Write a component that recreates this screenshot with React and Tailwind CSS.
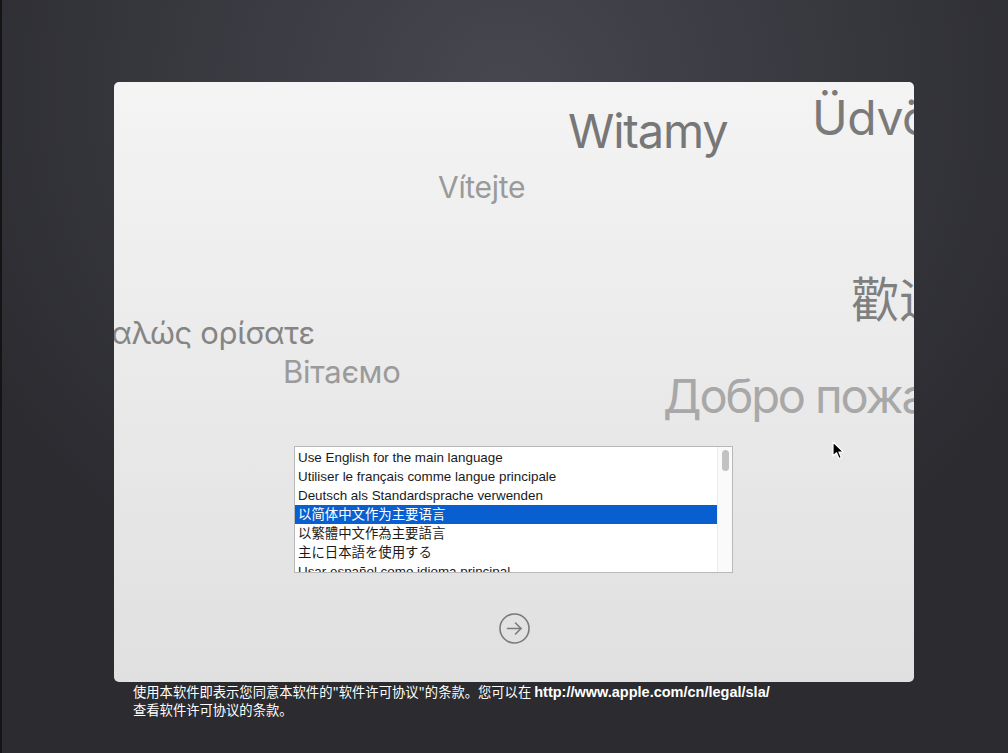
import React, { useState } from 'react'

const languages = [
    'Use English for the main language',
    'Utiliser le français comme langue principale',
    'Deutsch als Standardsprache verwenden',
    '以简体中文作为主要语言',
    '以繁體中文作為主要語言',
    '主に日本語を使用する',
    'Usar español como idioma principal',
];

const greetings = [
    { text: 'Witamy', cls: 'left-[454px] top-[25px] text-[47px] tracking-[-0.025em] text-[#777777]' },
    { text: 'Üdvözöljük', cls: 'left-[698px] top-[12px] text-[48px] tracking-[-0.01em] text-[#7a7a7a]' },
    { text: 'Vítejte', cls: 'left-[324px] top-[90px] text-[30px] tracking-[-0.01em] text-[#9a9a9a]' },
    { text: '歡迎使用', cls: 'left-[737px] top-[194px] text-[48px] text-[#7f7f7f]' },
    { text: 'Καλώς ορίσατε', cls: 'left-[-22px] top-[235px] text-[31px] tracking-[-0.01em] text-[#858585]' },
    { text: 'Вітаємо', cls: 'left-[169px] top-[274px] text-[31px] tracking-[-0.01em] text-[#9b9b9b]' },
    { text: 'Добро пожаловать', cls: 'left-[549px] top-[290px] text-[47px] tracking-[-0.045em] text-[#a8a8a8]' },
];

function Cursor() {
    return (
        <svg className="absolute left-[830px] top-[441px]" width="14" height="20" viewBox="0 0 14 20">
            <path d="M1 1 L1 15 L4.5 11.8 L7 17.5 L9.3 16.5 L6.9 11 L11.5 11 Z" fill="#000" stroke="#fff" strokeWidth="1.2" strokeLinejoin="round" />
        </svg>
    );
}

export default function App() {
    const [selected, setSelected] = useState(3);

    return (
        <div className="relative h-[753px] w-[1008px] overflow-hidden border-l-2 border-[#141414] bg-[radial-gradient(ellipse_60%_75%_at_50%_12%,#46474f_0%,#393a40_50%,#2b2b30_100%)] font-['Inter','Noto_Sans_CJK_SC',sans-serif]">
            <div className="pl-[112px] pt-[82px]">
                <div className="relative h-[600px] w-[800px] overflow-hidden rounded-[5px] bg-gradient-to-b from-[#f4f4f4] to-[#e0e0e0]">
                    {greetings.map((g) => (
                        <div key={g.text} className={`absolute whitespace-nowrap leading-none ${g.cls}`}>
                            {g.text}
                        </div>
                    ))}

                    <div className="flex flex-col items-center pt-[364px]">
                        <div className="-ml-[1px] flex h-[127px] w-[439px] overflow-hidden border border-[#b8b8b8] bg-white">
                            <ul className="flex-1 pt-[1px] text-[13.4px] leading-[19px] text-[#1a1a1a] font-['Liberation_Sans','Noto_Sans_CJK_SC',sans-serif]">
                                {languages.map((lang, i) => (
                                    <li
                                        key={lang}
                                        onClick={() => setSelected(i)}
                                        className={`h-[19px] whitespace-nowrap pl-[3px] ${i === selected ? 'bg-[#0a5fd0] text-white' : ''}`}
                                    >
                                        {lang}
                                    </li>
                                ))}
                            </ul>
                            <div className="w-[15px] border-l border-[#ececec] bg-[#fafafa] pt-[3px]">
                                <div className="mx-auto h-[21px] w-[7px] rounded-full bg-[#c2c2c2]" />
                            </div>
                        </div>

                        <button className="mt-[40px] flex h-[31px] w-[31px] items-center justify-center">
                            <svg width="31" height="31" viewBox="0 0 31 31" fill="none" stroke="#7a7a7a" strokeWidth="1.6" strokeLinecap="round" strokeLinejoin="round">
                                <circle cx="15.5" cy="15.5" r="14.5" />
                                <path d="M8.5 15.5 H22" />
                                <path d="M16.5 10 L22 15.5 L16.5 21" />
                            </svg>
                        </button>
                    </div>
                </div>
            </div>

            <div className="pl-[131px] pt-[1px] text-[13.3px] leading-[18px] text-white font-['Noto_Sans_CJK_SC',sans-serif]">
                <p>
                    使用本软件即表示您同意本软件的"软件许可协议"的条款。您可以在 <span className="text-[14.5px] font-semibold font-['Liberation_Sans',sans-serif]">http://www.apple.com/cn/legal/sla/</span>
                </p>
                <p>查看软件许可协议的条款。</p>
            </div>

            <Cursor />
        </div>
    )
}
